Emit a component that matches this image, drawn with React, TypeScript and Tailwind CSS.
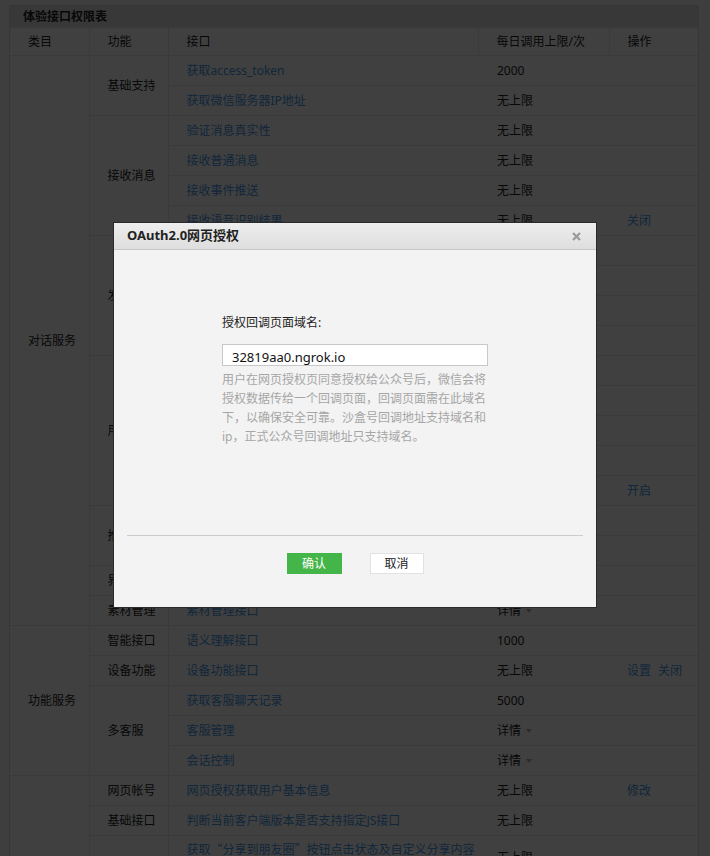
import React from 'react';

type Row = {
  cat?: [string, number];
  func?: [string, number];
  api: string;
  limit: string;
  detail?: boolean;
  ops?: string[];
};

const rows: Row[] = [
  { cat: ['对话服务', 19], func: ['基础支持', 2], api: '获取access_token', limit: '2000' },
  { api: '获取微信服务器IP地址', limit: '无上限' },
  { func: ['接收消息', 4], api: '验证消息真实性', limit: '无上限' },
  { api: '接收普通消息', limit: '无上限' },
  { api: '接收事件推送', limit: '无上限' },
  { api: '接收语音识别结果', limit: '无上限', ops: ['关闭'] },
  { func: ['发送消息', 4], api: '被动回复消息', limit: '无上限' },
  { api: '客服接口', limit: '500000' },
  { api: '群发接口', limit: '详情', detail: true },
  { api: '模板消息（业务通知）', limit: '详情', detail: true },
  { func: ['用户管理', 5], api: '用户分组管理', limit: '详情', detail: true },
  { api: '设置用户备注名', limit: '10000' },
  { api: '获取用户基本信息', limit: '5000000' },
  { api: '获取用户列表', limit: '500' },
  { api: '获取用户地理位置', limit: '无上限', ops: ['开启'] },
  { func: ['推广支持', 2], api: '生成带参数的二维码', limit: '100000' },
  { api: '长链接转短链接接口', limit: '1000' },
  { func: ['界面丰富', 1], api: '自定义菜单', limit: '详情', detail: true },
  { func: ['素材管理', 1], api: '素材管理接口', limit: '详情', detail: true },
  { cat: ['功能服务', 5], func: ['智能接口', 1], api: '语义理解接口', limit: '1000' },
  { func: ['设备功能', 1], api: '设备功能接口', limit: '无上限', ops: ['设置', '关闭'] },
  { func: ['多客服', 3], api: '获取客服聊天记录', limit: '5000' },
  { api: '客服管理', limit: '详情', detail: true },
  { api: '会话控制', limit: '详情', detail: true },
  { cat: ['网页服务', 6], func: ['网页帐号', 1], api: '网页授权获取用户基本信息', limit: '无上限', ops: ['修改'] },
  { func: ['基础接口', 1], api: '判断当前客户端版本是否支持指定JS接口', limit: '无上限' },
  { func: ['分享接口', 4], api: '获取“分享到朋友圈”按钮点击状态及自定义分享内容接口', limit: '无上限' },
  { api: '获取“分享给朋友”按钮点击状态及自定义分享内容接口', limit: '无上限' },
  { api: '获取“分享到QQ”按钮点击状态及自定义分享内容接口', limit: '无上限' },
  { api: '获取“分享到腾讯微博”按钮点击状态及自定义分享内容接口', limit: '无上限' },
];

// curly quotes should render full-width like the rest of the chinese text
function ApiName({ text }: { text: string }) {
  const parts = text.split(/([“”])/);
  return (
    <>
      {parts.map((p, i) =>
        p === '“' || p === '”' ? (
          <span key={i} className="font-['Noto_Sans_CJK_SC',sans-serif]">{p}</span>
        ) : (
          <React.Fragment key={i}>{p}</React.Fragment>
        )
      )}
    </>
  );
}

function PermissionTable() {
  return (
    <div className="border border-[#dcdcdc] bg-white">
      <div className="h-[21px] bg-[#e0e0e0] pl-[13px] text-[12px] font-bold leading-[21px] text-[#222]">体验接口权限表</div>
      <table className="w-full table-fixed border-collapse text-[12px] text-[#222]">
        <colgroup>
          <col className="w-[79px]" />
          <col className="w-[79px]" />
          <col className="w-[310px]" />
          <col className="w-[131px]" />
          <col />
        </colgroup>
        <thead>
          <tr>
            {['类目', '功能', '接口', '每日调用上限/次', '操作'].map((h, i) => (
              <th
                key={h}
                className={`h-[28px] border-y border-[#e7e7eb] pl-[18px] text-left font-normal ${i < 4 ? 'border-r' : ''}`}
              >
                {h}
              </th>
            ))}
          </tr>
        </thead>
        <tbody>
          {rows.map((r, i) => (
            <tr key={i}>
              {r.cat && (
                <td rowSpan={r.cat[1]} className="border-r border-b border-[#e7e7eb] pl-[18px]">
                  {r.cat[0]}
                </td>
              )}
              {r.func && (
                <td rowSpan={r.func[1]} className="border-r border-b border-[#e7e7eb] pl-[18px]">
                  {r.func[0]}
                </td>
              )}
              <td className="h-[30px] border-b border-[#e7e7eb] py-[5px] pr-[2px] pl-[18px] leading-[16px] text-[#459ae9]">
                <ApiName text={r.api} />
              </td>
              <td className="border-b border-[#e7e7eb] pl-[19px]">
                {r.limit}
                {r.detail && (
                  <span className="ml-[5px] inline-block h-0 w-0 border-x-[3px] border-t-[4px] border-x-transparent border-t-[#b0b0b0] align-middle" />
                )}
              </td>
              <td className="border-b border-[#e7e7eb] pl-[18px] text-[#459ae9]">
                {r.ops && (
                  <div className="flex gap-[7px]">
                    {r.ops.map((o) => (
                      <span key={o}>{o}</span>
                    ))}
                  </div>
                )}
              </td>
            </tr>
          ))}
        </tbody>
      </table>
    </div>
  );
}

function OAuthDialog() {
  return (
    <div className="fixed inset-0 z-10 flex justify-center bg-black/75 pt-[222px]">
      <div className="h-[386px] w-[484px] border border-[#2a2a2a] bg-[#f3f3f3]">
        <div className="flex h-[27px] items-center justify-between border-b border-[#c6c6c6] bg-gradient-to-b from-[#eeeeee] to-[#dedede] pr-[15px] pl-[13px]">
          <span className="text-[13px] font-bold text-[#222]">OAuth2.0网页授权</span>
          <svg width="9" height="9" viewBox="0 0 9 9" className="text-[#9a9a9a]">
            <path d="M1 1L8 8M8 1L1 8" stroke="currentColor" strokeWidth="2.2" />
          </svg>
        </div>
        <div className="h-[285px] pt-[63px]">
          <div className="mx-auto w-[266px]">
            <div className="text-[12px] leading-[20px] text-[#222]">授权回调页面域名:</div>
            <div className="mt-[11px] h-[22px] overflow-hidden border border-[#c8c8c8] bg-white pl-[9px] text-[13px] leading-[24px] text-[#111]">
              32819aa0.ngrok.io
            </div>
            <p className="mt-[4px] text-[12px] leading-[19px] text-[#a6a6a6]">
              用户在网页授权页同意授权给公众号后，微信会将授权数据传给一个回调页面，回调页面需在此域名下，以确保安全可靠。沙盒号回调地址支持域名和ip，正式公众号回调地址只支持域名。
            </p>
          </div>
        </div>
        <div className="mx-[13px] border-t border-[#cccccc]" />
        <div className="flex justify-center gap-[28px] pt-[17px]">
          <button className="h-[21px] w-[55px] bg-[#44b549] text-[12px] leading-[21px] text-white">确认</button>
          <button className="h-[21px] w-[54px] border border-[#e2e2e2] bg-white text-[12px] leading-[19px] text-[#222]">取消</button>
        </div>
      </div>
    </div>
  );
}

export default function App() {
  return (
    <div className="min-h-screen bg-[#f8f8f8] pt-[5px] pr-[11px] pl-[9px] font-['Noto_Sans','Noto_Sans_CJK_SC',sans-serif]">
      <PermissionTable />
      <OAuthDialog />
    </div>
  );
}
